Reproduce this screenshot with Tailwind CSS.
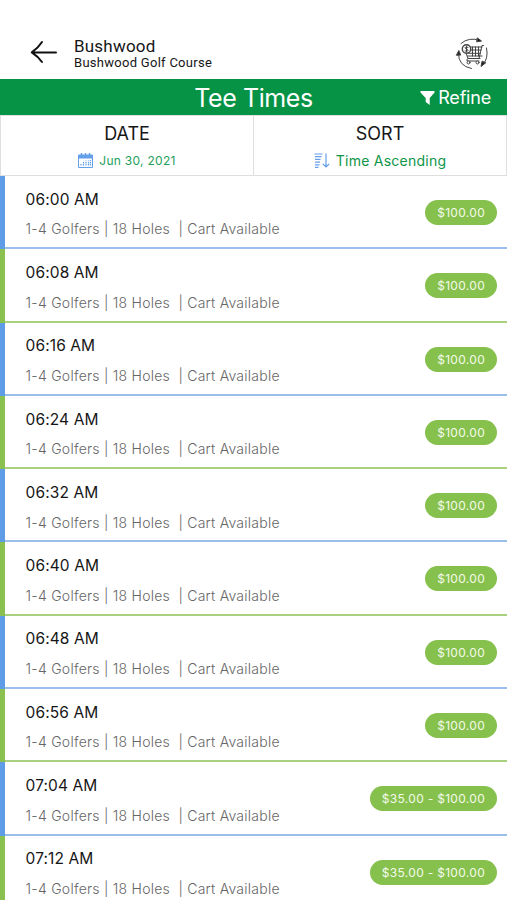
<!DOCTYPE html>
<html lang="en">
<head>
<meta charset="utf-8">
<title>Tee Times</title>
<script src="https://cdn.jsdelivr.net/npm/@tailwindcss/browser@4"></script>
</head>
<body class="bg-white">
<div class="w-[507px] h-[900px] overflow-hidden flex flex-col bg-white font-['Inter',sans-serif] text-[#161616]">
  <header class="h-[79px] shrink-0 flex items-start pl-[30px] pr-[16px] pt-[36px]">
    <svg class="w-[28px] h-[24px] mt-[4px]" viewBox="0 0 28 24" fill="none" stroke="#111" stroke-width="2" stroke-linecap="round" stroke-linejoin="round"><path d="M26 12.400H1.800M12 2Q8.500 7.500 1.800 12.400Q8 16.500 12 22"/></svg>
    <div class="ml-[16px] flex flex-col whitespace-nowrap font-['Roboto',sans-serif]">
      <span class="text-[17px] leading-[20px] tracking-[0.2px]">Bushwood</span>
      <span class="text-[13px] leading-[13px] tracking-[0.28px]">Bushwood Golf Course</span>
    </div>
    <svg class="ml-auto w-[36px] h-[34px] mt-px" viewBox="0 0 36 34" fill="none" stroke="#444" stroke-width="1" stroke-linecap="round" stroke-linejoin="round">
      <path d="M6 6.500Q14 -.5 25 3.500M31.500 11Q34 22 27 28.500M3.500 16Q3 29 16.500 31.500"/>
      <path d="M22.500 1l4 3-4.500.8zM30.500 26l-4.500 3.500 1-5zM1.500 18l2.300-4.500 1.800 4.200z" fill="#222"/>
      <path d="M16 10h11M27 19H12.500M25 21.500H13L11 16M28.500 8.500h-1.500L24 21.500M16 13h10M13 16.300h12.500M17.500 10v9M20.500 10v9M23.500 10v9"/>
      <path d="M13 21.500q-3 2 0 2.500h11"/>
      <circle cx="11.500" cy="12" r="4.200" fill="#fff" stroke-width="1.400"/>
      <path d="M13 10.300q-3-1-3 .5c0 1.500 3 .9 3 2.400s-2 1.200-3 .7M11.500 9.200v5.800"/>
      <circle cx="13.500" cy="25.500" r="1.500" fill="#fff"/><circle cx="22.500" cy="25.500" r="1.500" fill="#fff"/>
    </svg>
  </header>
  <div class="h-[36px] shrink-0 bg-[#079346] grid grid-cols-[1fr_auto_1fr] items-center text-white whitespace-nowrap">
    <span></span>
    <h1 class="text-[25px] leading-[36px] font-normal tracking-[-0.4px] pt-px">Tee Times</h1>
    <div class="flex items-center justify-end pr-[16px]">
      <svg class="w-[15px] h-[16px] mr-[3px]" viewBox="0 0 15 16" fill="#fff"><path d="M.5 1h14v1.500L9.700 8v7L5.700 12V8L.5 2.500z"/></svg>
      <span class="text-[18px] leading-[36px] tracking-[-0.2px]">Refine</span>
    </div>
  </div>
  <div class="h-[61px] shrink-0 grid grid-cols-[254px_253px] border-y border-[#dfdfdf] text-center whitespace-nowrap">
    <div class="border-x border-[#dfdfdf] pt-[8px]">
      <div class="text-[18px] leading-[20px]">DATE</div>
      <div class="flex items-center justify-center mt-[7px] h-[18px] text-[#24a05c]">
        <svg class="w-[15px] h-[15px] mr-[6px]" viewBox="0 0 15 15" fill="none" stroke="#659fe9"><path d="M.5 2h14v12.500H.5zM.5 5h14" /><path d="M.5 3.500h14" stroke-width="3"/><path d="M3.500 0v3M7.500 0v3M11.500 0v3" stroke-width="1.500"/><path d="M3 12.500v-2M5.500 12.500V9M8 12.500V7.500M10.500 12.500V7.500M12.500 12.500V7" stroke-width="1.200" stroke-dasharray="1.500 .6"/></svg>
        <span class="text-[12px] tracking-[0.28px] pt-[2px]">Jun 30, 2021</span>
      </div>
    </div>
    <div class="border-r border-[#dfdfdf] pt-[8px]">
      <div class="text-[18px] leading-[20px]">SORT</div>
      <div class="flex items-center justify-center mt-[7px] h-[18px] text-[#109548]">
        <svg class="w-[16px] h-[15px] mr-[6px]" viewBox="0 0 16 15" fill="none" stroke="#659fe9" stroke-width="1.200"><path d="M.5 1h8M1 3.700h6.500M1 6.400h5.500M1 9.100h5M1 11.800h4.500M1 14.300h3.500M12 .5v13.500M8.800 10.800L12 14l3.200-3.200"/></svg>
        <span class="text-[14px] tracking-[0.25px]">Time Ascending</span>
      </div>
    </div>
  </div>
  <main id="times" class="flex flex-col"></main>
</div>
<script>
const slots = [
  ['06:00 AM', '$100.00'], ['06:08 AM', '$100.00'], ['06:16 AM', '$100.00'], ['06:24 AM', '$100.00'],
  ['06:32 AM', '$100.00'], ['06:40 AM', '$100.00'], ['06:48 AM', '$100.00'], ['06:56 AM', '$100.00'],
  ['07:04 AM', '$35.00 - $100.00'], ['07:12 AM', '$35.00 - $100.00']
];
document.getElementById('times').innerHTML = slots.map(([time, price], i) => `
  <div class="h-[73.3px] shrink-0 flex items-center justify-between border-l-[5px] ${i % 2 ? 'border-l-[#89c04f]' : 'border-l-[#5f9ce8]'}">
    <div class="h-full flex-1 flex justify-between border-b-2 pl-[20.6px] pr-[10px] ${i % 2 ? 'border-b-[#a9d07e]' : 'border-b-[#9bbfeb]'}">
      <div class="pt-[13.7px]">
        <div class="text-[15.5px] leading-[20px] tracking-[0.1px]">${time}</div>
        <div class="text-[14px] leading-[20px] mt-[9.700px] font-light tracking-[0.25px] text-[#666] whitespace-pre">1-4 Golfers | 18 Holes  | Cart Available</div>
      </div>
      <div class="mt-[24px] h-[25px] px-[12px] rounded-full bg-[#86c04d] text-[#f4fbe9] text-[12px] leading-[25px] tracking-[0.3px] whitespace-nowrap">${price}</div>
    </div>
  </div>`).join('');
</script>
</body>
</html>
